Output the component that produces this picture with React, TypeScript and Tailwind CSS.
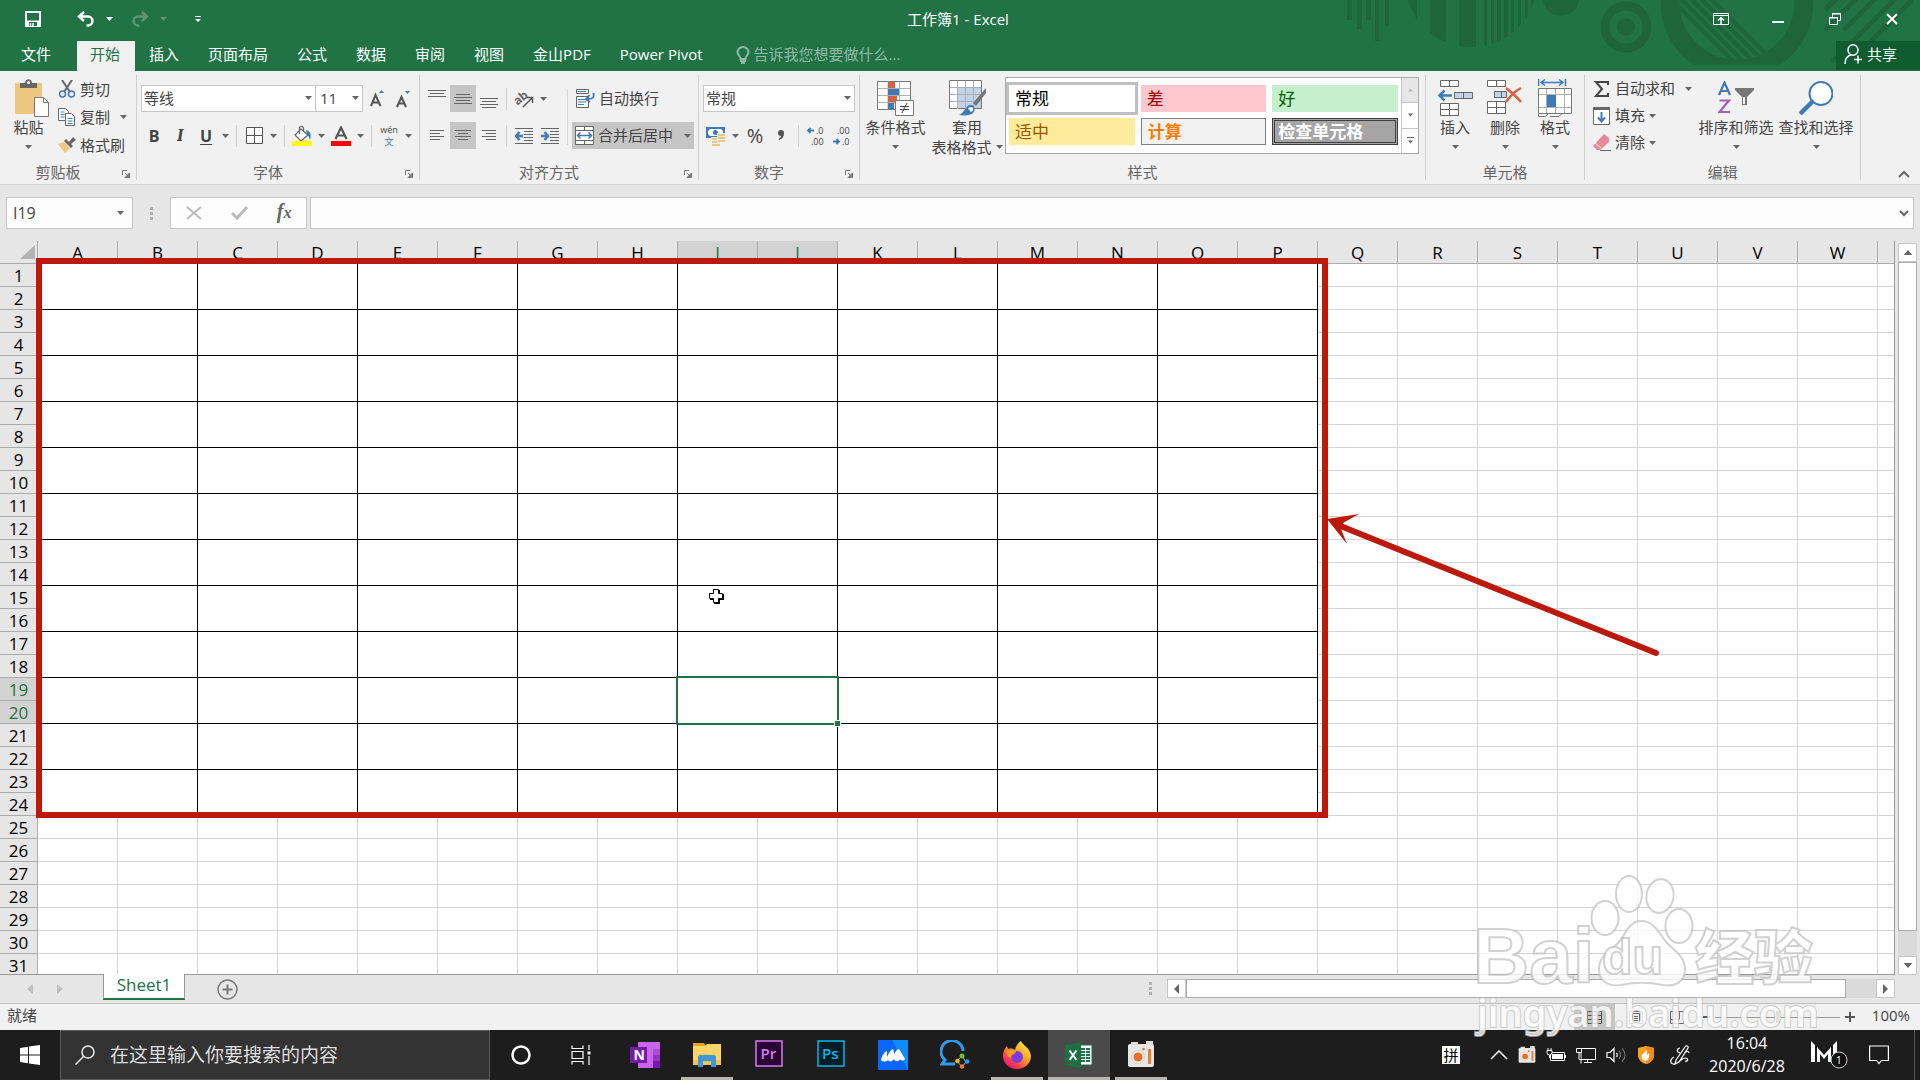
import type { ReactNode } from "react";

import { twMerge } from "tailwind-merge";

//types
type ChildrenProps = {
  children?: ReactNode;
  className?: string;
};

type ToolProps = ChildrenProps & {
  label: string;
  active?: boolean;
};

type BigToolProps = {
  icon: ReactNode;
  lines: string[];
  className?: string;
};

type SmallToolProps = {
  icon: ReactNode;
  label: string;
  arrow?: "near" | "far";
  className?: string;
};

type GroupProps = ChildrenProps & {
  title: string;
  launcher?: boolean;
};

const tabs = [
  "插入",
  "页面布局",
  "公式",
  "数据",
  "审阅",
  "视图",
  "金山PDF",
  "Power Pivot",
];

const columns = "ABCDEFGHIJKLMNOPQRSTUVW".split("");
const rows = Array.from({ length: 31 }, (_, i) => i + 1);
const mergedColumns = 16;
const mergedRows = 24;

const cellStyles = [
  { name: "常规", style: "bg-white text-black ring-3 ring-[#c0c0c0]" },
  { name: "差", style: "bg-[#ffc7ce] text-[#9c0006]" },
  { name: "好", style: "bg-[#c6efce] text-[#006100]" },
  { name: "适中", style: "bg-[#ffeb9c] text-[#9c5700]" },
  {
    name: "计算",
    style: "bg-[#f2f2f2] text-[#fa7d00] font-bold border border-[#7f7f7f]",
  },
  {
    name: "检查单元格",
    style:
      "bg-[#a5a5a5] px-[3px] text-white font-bold border-3 border-double border-[#3f3f3f]",
  },
];

//small pieces
function Arrow({ className }: ChildrenProps) {
  return (
    <svg
      viewBox="0 0 7 4"
      className={twMerge("w-[7px] h-1 shrink-0 fill-[#666]", className)}
    >
      <path d="M0 0h7L3.5 4z" />
    </svg>
  );
}

function ArrowButton({ label }: { label: string }) {
  return (
    <button
      aria-label={label}
      className="flex w-[13px] h-[27px] items-center justify-center"
    >
      <Arrow />
    </button>
  );
}

function Separator() {
  return (
    <div className="flex w-[9px] justify-center">
      <div className="w-px h-[22px] bg-[#d0d0d0]" />
    </div>
  );
}

function Tool({ label, active, children, className }: ToolProps) {
  return (
    <button
      aria-label={label}
      className={twMerge(
        "flex w-[26px] h-[27px] items-center justify-center",
        active && "bg-[#c5c5c5]",
        className
      )}
    >
      {children}
    </button>
  );
}

function BigTool({ icon, lines, className }: BigToolProps) {
  return (
    <button
      className={twMerge(
        "flex flex-col items-center pt-1 leading-5 whitespace-nowrap",
        className
      )}
    >
      <span className="flex h-[38px] items-center justify-center">{icon}</span>
      <span>{lines[0]}</span>
      <span className="flex h-5 items-center gap-1">
        {lines[1]}
        <Arrow />
      </span>
    </button>
  );
}

function SmallTool({ icon, label, arrow, className }: SmallToolProps) {
  return (
    <button
      className={twMerge("flex items-center gap-1 whitespace-nowrap", className)}
    >
      <span className="flex w-[19px] justify-center">{icon}</span>
      <span>{label}</span>
      {arrow && <Arrow className={arrow === "far" ? "ml-1.5" : ""} />}
    </button>
  );
}

function Group({ title, launcher, children, className }: GroupProps) {
  return (
    <section
      className={twMerge(
        "flex flex-col shrink-0 h-[105px] border-r border-[#d0d0d0]",
        className
      )}
    >
      <div className="flex flex-1">{children}</div>
      <div
        className={twMerge(
          "relative h-4 leading-4 text-center text-[#666]",
          launcher && "pr-5"
        )}
      >
        {title}
        {launcher && (
          <button
            aria-label={`${title}设置`}
            className="absolute right-1.5 bottom-0.5"
          >
            <svg viewBox="0 0 8 8" className="size-2" fill="none" stroke="#777">
              <path d="M.5 5V.5H5M3 3l3 3" />
              <path d="M7.500 3v4.500H3z" fill="#777" />
            </svg>
          </button>
        )}
      </div>
    </section>
  );
}

//horizontal bars used by the alignment icons: [x, y, width]
function Bars({ bars }: { bars: number[][] }) {
  return (
    <svg viewBox="0 0 18 20" className="w-[18px] h-5" fill="#666">
      {bars.map(([x, y, w], i) => (
        <rect key={i} x={x} y={y} width={w} height="1" />
      ))}
    </svg>
  );
}

function Header() {
  return (
    <header className="relative shrink-0 h-[71px] bg-[#217346] text-white overflow-hidden">
      {/* background pattern */}
      <svg
        viewBox="0 0 600 71"
        className="absolute right-0 top-0 w-[600px] h-[71px]"
        fill="#1e653c"
      >
        <defs>
          <clipPath id="disc">
            <circle cx="151" cy="-19" r="66" />
          </clipPath>
          <clipPath id="ring">
            <rect x="330" width="180" height="65" />
          </clipPath>
          <clipPath id="hole">
            <circle cx="417" cy="2" r="58" />
          </clipPath>
        </defs>
        <path d="M27 0h5v20h-5zM37 0h5v29h-5zM46 0h5v20h-5zM55 0h4v41h-4zM65 0h4v26h-4z" />
        <g clipPath="url(#disc)">
          <path d="M80 0h17v50H80zM110 0h16v50h-16zM139 0h17v50h-17zM164 0h3v50h-3zM171 0h3v50h-3zM177 0h4v50h-4zM184 0h4v50h-4zM191 0h3v50h-3zM198 0h3v50h-3zM205 0h3v50h-3zM211 0h5v50h-5z" />
        </g>
        <circle cx="241" cy="-2" r="18" />
        <circle cx="306" cy="27" r="21" fill="none" stroke="#1e653c" strokeWidth="9" />
        <circle cx="306" cy="27" r="9" />
        <g clipPath="url(#ring)">
          <circle cx="417" cy="2" r="67" fill="none" stroke="#1e653c" strokeWidth="19" />
        </g>
        <g clipPath="url(#hole)" stroke="#1e653c" strokeWidth="4">
          <path d="M350-2l80 80M350-12l90 90M358-14l90 90M368-14l84 84M378-14l74 74" />
        </g>
        <g stroke="#1e653c" strokeWidth="5">
          <path d="M505 10l14-14M505 30l34-34M524 30l34-34M512 62l66-66M530 62l62-62" />
        </g>
      </svg>

      {/* title bar */}
      <div className="relative flex h-[41px] items-start justify-between">
        <div className="flex w-56 h-[38px] items-center pl-[25px]">
          <button aria-label="保存">
            <svg viewBox="0 0 16 16" className="size-4" fill="none" stroke="#fff" strokeWidth="2">
              <path d="M1 1h14v14H1z" />
              <path d="M2 9.500h12v5H2z" fill="#fff" stroke="none" />
              <path d="M4 11h8v4H4z" fill="#217346" stroke="none" />
              <path d="M5.500 15v-3M8 12v4" stroke="#fff" strokeWidth="1.500" />
            </svg>
          </button>
          <button aria-label="撤消" className="ml-9">
            <svg viewBox="0 0 18 16" className="w-[18px] h-4" fill="none" stroke="#fff" strokeWidth="2.500">
              <path d="M7 1L2 5.500 7 10M2 5.500h9a4.500 4.500 0 010 9H9.500" />
            </svg>
          </button>
          <Arrow className="ml-[11px] fill-white" />
          <button aria-label="恢复" className="ml-[18px] opacity-25">
            <svg viewBox="0 0 18 16" className="w-[18px] h-4" fill="none" stroke="#fff" strokeWidth="2.500">
              <path d="M11 1l5 4.500-5 4.500M16 5.500H7a4.500 4.500 0 000 9h1.500" />
            </svg>
          </button>
          <Arrow className="ml-[11px] fill-white opacity-25" />
          <button aria-label="自定义快速访问工具栏" className="ml-7">
            <svg viewBox="0 0 6 6" className="size-1.5" fill="#fff">
              <path d="M0 0h6v1H0zM0 3h6L3 6z" />
            </svg>
          </button>
        </div>
        <h1 className="leading-[38px]">工作簿1 - Excel</h1>
        <div className="flex h-[38px]">
          <button aria-label="功能区显示选项" className="flex w-[57px] items-center justify-center">
            <svg viewBox="0 0 16 12" className="w-4 h-3" fill="none" stroke="#fff">
              <path d="M.5.500h15v11H.5zM1 2.500h14" />
              <path d="M8 11V5M5 7.500l3-3 3 3" strokeWidth="1.500" />
            </svg>
          </button>
          <button aria-label="最小化" className="flex w-[57px] items-center justify-center">
            <svg viewBox="0 0 12 12" className="size-3">
              <path d="M0 8h12v2H0z" fill="#fff" />
            </svg>
          </button>
          <button aria-label="向下还原" className="flex w-[57px] items-center justify-center">
            <svg viewBox="0 0 12 12" className="size-3" fill="none" stroke="#fff">
              <path d="M.5 4.500h8v7h-8zM3.500 4.500v-4h8v7h-3" />
              <path d="M0 5h9M3 1h9" />
            </svg>
          </button>
          <button aria-label="关闭" className="flex w-[57px] items-center justify-center">
            <svg viewBox="0 0 12 12" className="size-3" fill="none" stroke="#fff" strokeWidth="2">
              <path d="M1 1l10 10M11 1L1 11" />
            </svg>
          </button>
        </div>
      </div>

      {/* tabs */}
      <nav className="relative flex h-[30px] gap-px whitespace-nowrap">
        <button className="w-[76px] pr-1 pb-[3px]">文件</button>
        <button className="pl-[13px] pr-[15px] pb-[3px] bg-[#f1f1f1] text-[#217346]">
          开始
        </button>
        {tabs.map((tab) => (
          <button key={tab} className="pl-[13px] pr-[15px] pb-[3px]">
            {tab}
          </button>
        ))}
        <label className="flex flex-1 items-center gap-1 pl-[17px] pb-[3px]">
          <svg viewBox="0 0 14 18" className="w-3.5 h-[18px]" fill="none" stroke="#90b9a2" strokeWidth="2">
            <path d="M4.500 13c0-3-3-4-3-7a5.500 5 0 0111 0c0 3-3 4-3 7z" />
            <path d="M4 15h6M5 17h4" />
          </svg>
          <input
            aria-label="操作说明搜索"
            placeholder="告诉我您想要做什么..."
            className="w-[200px] bg-transparent outline-none placeholder:text-[#90b9a2]"
          />
        </label>
        <button className="flex w-[84px] h-[29px] items-center gap-1 pl-2 pb-[3px] bg-[#0e5c2f]">
          <svg viewBox="0 0 19 20" className="w-[19px] h-5" fill="none" stroke="#fff" strokeWidth="1.500">
            <ellipse cx="9" cy="6" rx="5" ry="5.200" />
            <path d="M1 20c0-5 2-8 6-9M10 15.500h8M14 11.500v8" />
          </svg>
          共享
        </button>
      </nav>
    </header>
  );
}

function ClipboardGroup() {
  return (
    <Group title="剪贴板" launcher className="w-[137px]">
      <BigTool
        lines={["粘贴"]}
        className="w-[57px]"
        icon={
          <svg viewBox="-6 0 40 38" className="w-10 h-[38px]">
            <path d="M0 4h27v31H0z" fill="#eec77e" />
            <path d="M5 9V4h5c0-5 7-5 7 0h5v5z" fill="#666" />
            <circle cx="13.500" cy="3.500" r="1.500" fill="#f1f1f1" />
            <path d="M19.500 18.500h9l5 5v14h-14z" fill="#fff" stroke="#777" />
            <path d="M28.500 18.500v5h5" fill="none" stroke="#777" />
          </svg>
        }
      />
      <div className="flex flex-col">
        <SmallTool
          label="剪切"
          className="h-7"
          icon={
            <svg viewBox="0 0 16 18" className="w-4 h-[18px]" fill="none">
              <path d="M3 0l8 12M13 0L5 12" stroke="#666" strokeWidth="2" />
              <circle cx="3.500" cy="14" r="3" stroke="#3f7ab8" strokeWidth="1.500" />
              <circle cx="12.500" cy="14" r="3" stroke="#3f7ab8" strokeWidth="1.500" />
            </svg>
          }
        />
        <SmallTool
          label="复制"
          className="h-7"
          arrow="far"
          icon={
            <svg viewBox="0 0 18 18" className="size-[18px]" fill="#fff" stroke="#666">
              <path d="M.5.500h7l3 3v9h-10z" />
              <path d="M7.500 5.500h6l3 3v9h-9z" />
              <path d="M2.500 4h4M2.500 6.500h4M2.500 9h4M9.500 10.500h5M9.500 13h5M9.500 15.500h5" stroke="#3f7ab8" />
            </svg>
          }
        />
        <SmallTool
          label="格式刷"
          className="h-7"
          icon={
            <svg viewBox="0 0 18 16" className="w-[18px] h-4">
              <path d="M0 7l6-2 6 6-5 5z" fill="#eec77e" />
              <path d="M6 4l2-2 7 7-2 2zM11 5l4-5 3 3-5 4z" fill="#666" />
            </svg>
          }
        />
      </div>
    </Group>
  );
}

function FontGroup() {
  return (
    <Group title="字体" launcher className="w-[283px]">
      <div className="flex flex-col gap-2.5 pt-2.5 pl-1">
        <div className="flex items-center">
          <div className="relative">
            <select
              aria-label="字体"
              className="w-[175px] h-[27px] pl-0.5 appearance-none bg-white border border-[#c6c6c6]"
            >
              <option>等线</option>
            </select>
            <Arrow className="absolute right-1 top-[11px] pointer-events-none" />
          </div>
          <div className="relative">
            <select
              aria-label="字号"
              className="w-[47px] h-[27px] pl-1 appearance-none bg-white border border-l-0 border-[#c6c6c6]"
            >
              <option>11</option>
            </select>
            <Arrow className="absolute right-1 top-[11px] pointer-events-none" />
          </div>
          <Tool label="增大字号">
            <svg viewBox="-2 0 16 18" className="w-4 h-[18px]" fill="none">
              <path d="M1 16L5.500 5l5 11M3 12.500h6" stroke="#555" strokeWidth="2" />
              <path d="M9 3l2.500-3L14 3z" fill="#3f7ab8" />
            </svg>
          </Tool>
          <Tool label="减小字号">
            <svg viewBox="-2 0 16 18" className="w-4 h-[18px]" fill="none">
              <path d="M1 17L5.500 7l4.500 10M3 13.500h5" stroke="#555" strokeWidth="2" />
              <path d="M9 1l2.500 3L14 1z" fill="#3f7ab8" />
            </svg>
          </Tool>
        </div>
        <div className="flex items-center">
          <Tool label="加粗" className="text-base font-bold">
            B
          </Tool>
          <Tool label="倾斜" className="font-serif text-lg font-bold italic">
            I
          </Tool>
          <Tool label="下划线" className="text-base font-bold underline underline-offset-2">
            U
          </Tool>
          <ArrowButton label="下划线选项" />
          <Separator />
          <Tool label="边框">
            <svg viewBox="0 0 17 17" className="size-[17px]" fill="#fff" stroke="#555">
              <path d="M.5.500h16v16H.5zM8.500 0v17M0 8.500h17" />
            </svg>
          </Tool>
          <ArrowButton label="边框选项" />
          <Separator />
          <Tool label="填充颜色">
            <svg viewBox="0 0 20 20" className="size-5">
              <path d="M9 3l7 6-7 6-6-6z" fill="#fff" stroke="#666" strokeWidth="1.200" />
              <path d="M7.500 8V2c0-2 4-2 4 0v4" fill="none" stroke="#666" strokeWidth="1.200" />
              <path d="M14 4c4 1 6 4 4 10-1-3-1-4-3-5z" fill="#3f7ab8" />
              <path d="M0 15h20v5H0z" fill="#ff0" />
            </svg>
          </Tool>
          <ArrowButton label="填充颜色选项" />
          <Tool label="字体颜色">
            <svg viewBox="0 0 20 20" className="size-5">
              <path d="M4.500 13L10 1.500 15.500 13M6.500 9.500h7" fill="none" stroke="#555" strokeWidth="2.200" />
              <path d="M0 15h20v5H0z" fill="#f00" />
            </svg>
          </Tool>
          <ArrowButton label="字体颜色选项" />
          <Separator />
          <Tool label="显示拼音字段" className="flex-col text-[9px] leading-3">
            <span>wén</span>
            <span className="text-[#3f7ab8]">文</span>
          </Tool>
          <ArrowButton label="拼音选项" />
        </div>
      </div>
    </Group>
  );
}

function AlignGroup() {
  return (
    <Group title="对齐方式" launcher className="w-[279px]">
      <div className="flex flex-col gap-2.5 pt-2.5 pl-1">
        <div className="flex items-center">
          <Tool label="顶端对齐">
            <Bars bars={[[0, 1, 18], [2, 4, 14], [0, 7, 18]]} />
          </Tool>
          <Tool label="垂直居中" active>
            <Bars bars={[[2, 5, 14], [0, 8, 18], [2, 11, 14], [0, 14, 18]]} />
          </Tool>
          <Tool label="底端对齐">
            <Bars bars={[[0, 9, 18], [2, 12, 14], [0, 15, 18], [2, 18, 14]]} />
          </Tool>
          <Separator />
          <Tool label="方向">
            <svg viewBox="0 0 20 20" className="size-5 overflow-visible" fill="none">
              <text
                x="0"
                y="13"
                fontSize="12"
                fontWeight="bold"
                fill="#666"
                transform="rotate(-40 7 10)"
              >
                ab
              </text>
              <path d="M9 18l9-9M13 8.500h5.500V14" stroke="#555" strokeWidth="1.500" />
            </svg>
          </Tool>
          <ArrowButton label="方向选项" />
        </div>
        <div className="flex items-center">
          <Tool label="左对齐">
            <Bars bars={[[2, 4, 14], [2, 7, 10], [2, 10, 14], [2, 13, 10]]} />
          </Tool>
          <Tool label="居中" active>
            <Bars bars={[[1, 4, 16], [4, 7, 10], [1, 10, 16], [4, 13, 10]]} />
          </Tool>
          <Tool label="右对齐">
            <Bars bars={[[2, 4, 14], [6, 7, 10], [2, 10, 14], [6, 13, 10]]} />
          </Tool>
          <Separator />
          <Tool label="减少缩进量">
            <svg viewBox="0 0 18 16" className="w-[18px] h-4">
              <path d="M0 0h18v1H0zM9 3h9v1H9zM9 6h9v1H9zM9 9h9v1H9zM9 12h9v1H9zM0 15h18v1H0z" fill="#666" />
              <path d="M8 8H1M4.500 4L1 8l3.500 4" fill="none" stroke="#3f7ab8" strokeWidth="2.500" />
            </svg>
          </Tool>
          <Tool label="增加缩进量">
            <svg viewBox="0 0 18 16" className="w-[18px] h-4">
              <path d="M0 0h18v1H0zM9 3h9v1H9zM9 6h9v1H9zM9 9h9v1H9zM9 12h9v1H9zM0 15h18v1H0z" fill="#666" />
              <path d="M0 8h7M3.500 4L7 8l-3.500 4" fill="none" stroke="#3f7ab8" strokeWidth="2.500" />
            </svg>
          </Tool>
        </div>
      </div>
      <div className="flex w-[9px] justify-center pt-3.5">
        <div className="w-px h-14 bg-[#d8d8d8]" />
      </div>
      <div className="flex flex-col gap-2.5 pt-2.5">
        <SmallTool
          label="自动换行"
          className="h-[27px] pl-1"
          icon={
            <svg viewBox="0 0 19 19" className="size-[19px]" fill="#fff" stroke="#666">
              <path d="M.5.500h12v4H.5zM.5 7.500h12v11H.5z" />
              <path d="M2 2.500h8M2 10.500h8M2 13h8M2 15.500h6" stroke="#3f7ab8" />
              <path d="M17.500 4c1 5-1 6-7 6M13.500 6l-3.500 4 4 3" fill="none" stroke="#3f7ab8" strokeWidth="1.800" />
            </svg>
          }
        />
        <div className="flex w-[122px] h-[27px] bg-[#c5c5c5]">
          <SmallTool
            label="合并后居中"
            className="pl-[3px] pr-2"
            icon={
              <svg viewBox="0 0 19 19" className="size-[19px]" fill="#fff" stroke="#666">
                <path d="M.5.500h18v18H.5z" />
                <path d="M0 4.500h19M0 14.500h19M9.500 0v4M9.500 15v4" />
                <path d="M3 9.500h13M5.500 6.500l-3 3 3 3M13.500 6.500l3 3-3 3" fill="none" stroke="#3f7ab8" strokeWidth="1.500" />
              </svg>
            }
          />
          <ArrowButton label="合并选项" />
        </div>
      </div>
    </Group>
  );
}

function NumberGroup() {
  return (
    <Group title="数字" launcher className="w-[161px]">
      <div className="flex flex-col gap-2.5 pt-2.5 pl-1">
        <div className="relative">
          <select
            aria-label="数字格式"
            className="w-[152px] h-[27px] pl-0.5 appearance-none bg-white border border-[#c6c6c6]"
          >
            <option>常规</option>
          </select>
          <Arrow className="absolute right-1 top-[11px] pointer-events-none" />
        </div>
        <div className="flex items-center">
          <Tool label="会计数字格式">
            <svg viewBox="0 0 20 20" className="size-5">
              <path d="M0 1h19v11H0z" fill="#3f7ab8" />
              <path d="M4 3h11l2 2v3l-2 2H4L2 8V5z" fill="#fff" />
              <circle cx="9.500" cy="6.500" r="2.500" fill="#3f7ab8" />
              <path d="M11 7h9v13H5v-9h6z" fill="#f1f1f1" />
              <path d="M12 8h7v2h-7zM12 11h7v2h-7zM12 14h7v2h-7zM6 12h5v2H6zM6 15h5v2H6zM6 18h8v2H6z" fill="#eec77e" />
            </svg>
          </Tool>
          <ArrowButton label="会计格式选项" />
          <Tool label="百分比样式" className="text-xl">
            %
          </Tool>
          <Tool label="千位分隔样式">
            <svg viewBox="0 0 8 12" className="w-2 h-3" fill="#555">
              <path d="M1 3a3 3 0 016 0c0 4-2 6-5 7l-.5-1C3 8 4 7 4 6 2 6 1 5 1 3z" />
            </svg>
          </Tool>
          <Separator />
          <Tool label="增加小数位数">
            <svg viewBox="0 0 18 20" className="w-[18px] h-5 overflow-visible" fontSize="9" fill="#444">
              <text x="9" y="8">.0</text>
              <text x="4" y="19">.00</text>
              <path d="M7 4.500H1M3.500 2L1 4.500 3.500 7" fill="none" stroke="#3f7ab8" strokeWidth="1.800" />
            </svg>
          </Tool>
          <Tool label="减少小数位数">
            <svg viewBox="0 0 18 20" className="w-[18px] h-5 overflow-visible" fontSize="9" fill="#444">
              <text x="4" y="8">.00</text>
              <text x="9" y="19">.0</text>
              <path d="M0 15.500h6M3.500 13L6 15.500 3.500 18" fill="none" stroke="#3f7ab8" strokeWidth="1.800" />
            </svg>
          </Tool>
        </div>
      </div>
    </Group>
  );
}

function StylesGroup() {
  return (
    <Group title="样式" className="w-[566px]">
      <BigTool
        lines={["条件格式"]}
        className="w-[71px]"
        icon={
          <svg viewBox="0 0 37 36" className="w-[37px] h-9" fill="#fff" stroke="#b0b0b0">
            <path d="M.5 1.500h33v28H.5z" stroke="#777" />
            <path d="M11 1.500v28M22.500 1.500v28M1 8.500h32M1 15.500h32M1 22.500h32" fill="none" />
            <path d="M11 2h7v6h-7zM11 16h9v6h-9z" fill="#d9603f" stroke="none" />
            <path d="M11 9h11v6H11zM11 23h6v6h-6z" fill="#3f7ab8" stroke="none" />
            <path d="M18.500 20.500h18v15h-18z" stroke="#777" />
            <path d="M23 26.500h9M23 29.500h9M30 23l-5 10" stroke="#444" fill="none" />
          </svg>
        }
      />
      <BigTool
        lines={["套用", "表格格式"]}
        className="w-[72px]"
        icon={
          <svg viewBox="0 0 37 36" className="w-[37px] h-9" fill="#fff" stroke="#b0b0b0">
            <path d="M.5.500h32v28H.5z" stroke="#777" />
            <path d="M9 8h23v20H9z" fill="#c0d3e9" stroke="none" />
            <path d="M8.500 1v28M16.500 1v28M24.500 1v28M1 7.500h31M1 14.500h31M1 21.500h31" fill="none" />
            <path d="M37 8v5L27 26l-3-3z" fill="#777" stroke="none" />
            <path d="M10 35c6-2 6-10 12-10 4 0 5 5 2 8-2 2-8 3-14 2z" fill="#3f7ab8" stroke="none" />
            <path d="M19 29c0-2 4-3 5-1 1 1-1 4-2 4s0-2-3-3z" stroke="none" />
          </svg>
        }
      />
      <div className="flex w-[414px] h-[77px] mt-0.5 ml-0.5 border border-[#ababab] bg-white">
        <div className="grid flex-1 grid-cols-3 content-start gap-1.5 pt-[7px] px-[3px] text-[17px] leading-5">
          {cellStyles.map((item) => (
            <button
              key={item.name}
              className={twMerge(
                "flex h-[27px] items-center px-1.5 whitespace-nowrap",
                item.style
              )}
            >
              {item.name}
            </button>
          ))}
        </div>
        <div className="flex w-[17px] flex-col divide-y divide-[#c6c6c6] border-l border-[#c6c6c6]">
          <button aria-label="上一行" className="flex flex-1 items-center justify-center bg-[#e6e6e6]">
            <Arrow className="w-[5px] rotate-180 fill-[#bbb]" />
          </button>
          <button aria-label="下一行" className="flex flex-1 items-center justify-center">
            <Arrow className="w-[5px]" />
          </button>
          <button aria-label="其他" className="flex flex-1 flex-col gap-0.5 items-center justify-center">
            <span className="w-[7px] h-px bg-[#666]" />
            <Arrow className="w-[5px]" />
          </button>
        </div>
      </div>
    </Group>
  );
}

function CellsGroup() {
  return (
    <Group title="单元格" className="w-[159px]">
      <div className="flex pl-1">
        <BigTool
          lines={["插入"]}
          className="w-[50px]"
          icon={
            <svg viewBox="0 0 36 36" className="size-9" fill="#fff" stroke="#666">
              <path d="M3.500.500h18v6h-18zM12.500 1v6M3.500 23.500h18v12h-18zM12.500 24v12M4 29.500h18" />
              <path d="M17.500 12.500h18v6h-18zM26.500 13v6" fill="#c0d3e9" />
              <path d="M15 15.500H3M7.500 10.500l-5 5 5 5" fill="none" stroke="#3f7ab8" strokeWidth="2.500" />
            </svg>
          }
        />
        <BigTool
          lines={["删除"]}
          className="w-[50px]"
          icon={
            <svg viewBox="0 0 36 36" className="size-9" fill="#fff" stroke="#666">
              <path d="M.5.500h18v6H.5zM9.500 1v6M.5 21.500h18v12H.5zM9.500 22v12M1 27.500h18" />
              <path d="M7.500 11.500h12v6h-12zM14.500 12v6" fill="#c0d3e9" />
              <path d="M19 8c5 4 10 8 15 14M34 8c-6 3-11 8-15 14" fill="none" stroke="#d9603f" strokeWidth="2.500" />
            </svg>
          }
        />
        <BigTool
          lines={["格式"]}
          className="w-[50px]"
          icon={
            <svg viewBox="0 0 34 38" className="w-[34px] h-[38px]" fill="#fff" stroke="#b0b0b0">
              <path d="M.5 9.500h33v25H.5z" stroke="#777" />
              <path d="M8.500 10v24M17.500 10v24M26.500 10v24M1 15.500h32M1 28.500h32" fill="none" />
              <path d="M9 16h9v12H9z" fill="#3f7ab8" stroke="none" />
              <path d="M.5 34.500v3h7l3-3M12 37.500h9l3-3" stroke="#777" fill="none" />
              <path d="M.5 0v7M27.500 0v7M3 3.500h22M7 .5l-4 3 4 3M21 .5l4 3-4 3" fill="none" stroke="#3f7ab8" strokeWidth="1.500" />
            </svg>
          }
        />
      </div>
    </Group>
  );
}

function EditGroup() {
  return (
    <Group title="编辑" className="w-[276px]">
      <div className="flex w-[111px] flex-col items-start pl-[7px]">
        <SmallTool
          label="自动求和"
          className="h-[27px]"
          arrow="far"
          icon={
            <svg viewBox="0 0 16 16" className="size-4" fill="none" stroke="#444" strokeWidth="2">
              <path d="M14 4V1H2l6 7-6 7h12v-3" />
            </svg>
          }
        />
        <SmallTool
          label="填充"
          className="h-[27px]"
          arrow="near"
          icon={
            <svg viewBox="0 0 17 18" className="w-[17px] h-[18px]" fill="#fff" stroke="#666">
              <path d="M.5.500h16v17H.5z" />
              <path d="M0 0h17v3H0z" fill="#666" stroke="none" />
              <path d="M8.500 5v9M5 10.500l3.500 4 3.500-4" fill="none" stroke="#3f7ab8" strokeWidth="2" />
            </svg>
          }
        />
        <SmallTool
          label="清除"
          className="h-[27px]"
          arrow="near"
          icon={
            <svg viewBox="0 0 18 17" className="w-[18px] h-[17px]">
              <path d="M11 0l5 4v4l-9 8H4l-4-4z" fill="#e58a9b" />
              <path d="M2 9l6 5" stroke="#f1f1f1" />
              <path d="M7 16h11v1H7z" fill="#666" />
            </svg>
          }
        />
      </div>
      <BigTool
        lines={["排序和筛选"]}
        className="w-20"
        icon={
          <svg viewBox="0 0 36 34" className="w-9 h-[34px]" fill="none" strokeWidth="2.200">
            <path d="M1 14L6.500 1.500 12 14M3 10h7" stroke="#3f7ab8" />
            <path d="M1.500 19.500h9.500L1.500 31H12" stroke="#9b62b8" />
            <path d="M17 7h19v2l-7 7v8h-5v-8l-7-7z" fill="#777" />
            <path d="M25 16h2v7h-2z" fill="#f1f1f1" />
          </svg>
        }
      />
      <BigTool
        lines={["查找和选择"]}
        className="w-20"
        icon={
          <svg viewBox="0 0 34 34" className="size-[34px]" stroke="#3f7ab8">
            <circle cx="22" cy="12.500" r="11.500" fill="#fff" strokeWidth="2" />
            <path d="M13 21L2.500 31.500" strokeWidth="4.500" strokeLinecap="round" />
          </svg>
        }
      />
    </Group>
  );
}

function Ribbon() {
  return (
    <div className="flex shrink-0 h-[114px] py-1 bg-[#f1f1f1] border-b border-[#d5d5d5]">
      <ClipboardGroup />
      <FontGroup />
      <AlignGroup />
      <NumberGroup />
      <StylesGroup />
      <CellsGroup />
      <EditGroup />
      <div className="flex flex-1 items-end justify-end pr-2.5 pb-0.5">
        <button aria-label="折叠功能区">
          <svg viewBox="0 0 12 8" className="w-3 h-2" fill="none" stroke="#666" strokeWidth="2">
            <path d="M1 7l5-5 5 5" />
          </svg>
        </button>
      </div>
    </div>
  );
}

function Dots() {
  return (
    <div className="flex flex-col gap-0.5">
      <span className="size-[3px] bg-[#b0b0b0]" />
      <span className="size-[3px] bg-[#b0b0b0]" />
      <span className="size-[3px] bg-[#b0b0b0]" />
    </div>
  );
}

function FormulaBar() {
  return (
    <div className="flex shrink-0 h-14 py-3 px-1.5 items-stretch">
      <div className="flex w-[127px] items-center bg-[#fdfdfd] border border-[#c6c6c6] pr-2">
        <input
          aria-label="名称框"
          defaultValue="I19"
          className="w-full min-w-0 pl-1.5 bg-transparent outline-none text-base"
        />
        <Arrow />
      </div>
      <div className="flex w-[37px] items-center justify-center">
        <Dots />
      </div>
      <div className="flex w-[137px] items-center justify-around bg-[#fdfdfd] border border-[#c6c6c6]">
        <button aria-label="取消">
          <svg viewBox="0 0 16 14" className="w-4 h-3.5" fill="none" stroke="#bbb" strokeWidth="2">
            <path d="M1 1l14 12M15 1L1 13" />
          </svg>
        </button>
        <button aria-label="输入">
          <svg viewBox="0 0 17 14" className="w-[17px] h-3.5" fill="none" stroke="#bbb" strokeWidth="3">
            <path d="M1 7l5 5L16 1" />
          </svg>
        </button>
        <button
          aria-label="插入函数"
          className="pb-0.5 font-[Liberation_Serif,serif] text-xl leading-6 italic font-bold text-[#666]"
        >
          f<span className="text-base">x</span>
        </button>
      </div>
      <div className="flex flex-1 ml-[3px] items-center bg-[#fdfdfd] border border-[#c6c6c6] pr-1">
        <input aria-label="编辑栏" className="flex-1 px-2 bg-transparent outline-none" />
        <button aria-label="展开编辑栏">
          <svg viewBox="0 0 10 7" className="w-2.5 h-[7px]" fill="none" stroke="#666" strokeWidth="2">
            <path d="M1 1l4 4 4-4" />
          </svg>
        </button>
      </div>
    </div>
  );
}

function Sheet() {
  return (
    <div className="relative flex-1 overflow-hidden border-r border-b border-[#999]">
      <table className="w-full table-fixed border-separate border-spacing-0 text-[17px] leading-5 text-black">
        <colgroup>
          <col className="w-[38px]" />
          {columns.map((column) => (
            <col key={column} className="w-20" />
          ))}
          <col />
        </colgroup>
        <thead>
          <tr className="h-[23px]">
            <th className="p-0 border-r border-b border-[#ababab]">
              <svg viewBox="0 0 16 16" className="size-4 ml-auto mr-0.5" fill="#b3b3b3">
                <path d="M16 1v14H1z" />
              </svg>
            </th>
            {columns.map((column) => (
              <th
                key={column}
                className={twMerge(
                  "p-0 pt-0.5 font-normal border-r border-b border-[#ababab]",
                  (column === "I" || column === "J") &&
                    "bg-[#d2d2d2] text-[#217346]"
                )}
              >
                {column}
              </th>
            ))}
            <th className="p-0 border-b border-[#ababab]" />
          </tr>
        </thead>
        <tbody>
          {rows.map((row) => (
            <tr key={row} className="h-[23px] bg-white">
              <th
                className={twMerge(
                  "p-0 pt-0.5 font-normal bg-[#e6e6e6] border-r border-b border-[#ababab]",
                  (row === 19 || row === 20) && "bg-[#d2d2d2] text-[#217346]"
                )}
              >
                {row}
              </th>
              {columns.map((column, index) => {
                if (row <= mergedRows && index < mergedColumns) {
                  //one bordered cell stands for a merged 2x2 block
                  return row % 2 === 1 && index % 2 === 0 ? (
                    <td
                      key={column}
                      rowSpan={2}
                      colSpan={2}
                      className="p-0 border-r border-b border-black"
                    />
                  ) : null;
                }
                return (
                  <td
                    key={column}
                    className="p-0 border-r border-b border-[#d4d4d4]"
                  />
                );
              })}
              <td className="p-0 border-b border-[#d4d4d4]" />
            </tr>
          ))}
        </tbody>
      </table>

      {/* selected cell */}
      <div className="absolute left-[676px] top-[435px] w-[163px] h-[49px] border-2 border-[#217346]">
        <span className="absolute -right-1 -bottom-1 size-[7px] bg-[#217346] border border-white" />
      </div>

      {/* mouse pointer */}
      <svg viewBox="0 0 15 15" className="absolute left-[709px] top-[348px] size-[15px]">
        <path d="M5 1h6v4h4v6h-4v4H5v-4H1V5h4z" fill="#000" />
        <path d="M4.500.500h5v4h4v5h-4v4h-5v-4h-4v-5h4z" fill="#fff" stroke="#000" />
      </svg>

      {/* red frame and arrow */}
      <div className="absolute left-[36px] top-[17px] w-[1292px] h-[560px] border-6 border-[#bd190a]" />
      <svg viewBox="0 0 340 150" className="absolute left-[1326px] top-[271px] w-[340px] h-[150px]">
        <path d="M12 13L330 141" stroke="#bd190a" strokeWidth="6" strokeLinecap="round" />
        <path d="M1 7l32-5-16 9-2 6 6 15z" fill="#bd190a" />
      </svg>
    </div>
  );
}

function VerticalScroll() {
  return (
    <div className="flex w-[25px] flex-col px-[3px] pt-0.5">
      <button aria-label="向上滚动" className="flex h-[19px] items-center justify-center bg-white border border-[#c6c6c6]">
        <Arrow className="w-2.5 h-[5px] rotate-180" />
      </button>
      <div className="flex-1 bg-[#dadada] pb-[25px]">
        <div className="h-full bg-white border border-[#ababab]" />
      </div>
      <button aria-label="向下滚动" className="flex h-[19px] items-center justify-center bg-white border border-[#c6c6c6]">
        <Arrow className="w-2.5 h-[5px]" />
      </button>
    </div>
  );
}

function SheetBar() {
  return (
    <div className="flex shrink-0 h-[29px] items-start border-b border-[#c0c0c0]">
      <div className="flex w-[103px] h-7 items-center gap-6 pl-[27px]">
        <button aria-label="上一张">
          <svg viewBox="0 0 6 10" className="w-1.5 h-2.5" fill="#c0c0c0">
            <path d="M6 0v10L0 5z" />
          </svg>
        </button>
        <button aria-label="下一张">
          <svg viewBox="0 0 6 10" className="w-1.5 h-2.5" fill="#c0c0c0">
            <path d="M0 0v10l6-5z" />
          </svg>
        </button>
      </div>
      <button className="relative w-[82px] h-[26px] -mt-px pb-[3px] bg-white border-x border-x-[#999] border-b-2 border-b-[#217346] text-[17px] leading-5 text-[#217346]">
        Sheet1
      </button>
      <button aria-label="新工作表" className="ml-8 mt-1">
        <svg viewBox="0 0 21 21" className="size-[21px]" fill="none" stroke="#777">
          <circle cx="10.500" cy="10.500" r="9.500" strokeWidth="1.500" />
          <path d="M5.500 10.500h10M10.500 5.500v10" strokeWidth="2" />
        </svg>
      </button>
      <div className="flex flex-1 justify-end pr-[15px] pt-[7px]">
        <Dots />
      </div>
      <div className="flex w-[728px] h-[19px] mt-1 mr-[25px]">
        <button aria-label="向左滚动" className="flex w-[19px] items-center justify-center bg-white border border-[#c6c6c6]">
          <svg viewBox="0 0 5 10" className="w-[5px] h-2.5" fill="#666">
            <path d="M5 0v10L0 5z" />
          </svg>
        </button>
        <div className="flex-1 bg-[#dadada] pr-[30px]">
          <div className="h-full bg-white border border-[#ababab]" />
        </div>
        <button aria-label="向右滚动" className="flex w-[19px] items-center justify-center bg-white border border-[#c6c6c6]">
          <svg viewBox="0 0 5 10" className="w-[5px] h-2.5" fill="#666">
            <path d="M0 0v10l5-5z" />
          </svg>
        </button>
      </div>
    </div>
  );
}

function StatusBar() {
  return (
    <div className="flex shrink-0 h-[26px] items-center pl-[7px] pr-2.5 bg-[#f1f1f1]">
      <span className="flex-1 pb-[3px]">就绪</span>
      <button aria-label="普通" className="flex w-[41px] h-full items-center justify-center bg-[#c5c5c5]">
        <svg viewBox="0 0 15 13" className="w-[15px] h-[13px]" fill="none" stroke="#555">
          <path d="M.5.500h14v12H.5zM5.500 0v13M10 0v13M0 4.500h15M0 8.500h15" />
        </svg>
      </button>
      <button aria-label="页面布局" className="flex w-[41px] h-full items-center justify-center">
        <svg viewBox="0 0 14 13" className="w-3.5 h-[13px]" fill="none" stroke="#666">
          <path d="M.5.500h13v12H.5zM3.500 2.500h7v10M3.500 2.500v10M5 5.500h4M5 7.500h4M5 9.500h4" />
        </svg>
      </button>
      <button aria-label="分页预览" className="flex w-[41px] h-full items-center justify-center">
        <svg viewBox="0 0 14 13" className="w-3.5 h-[13px]" fill="none" stroke="#666">
          <path d="M.5.500h13v12H.5zM5.500 0v8M9.500 0v8M0 8.500h9.500" />
        </svg>
      </button>
      <button aria-label="缩小" className="flex w-[18px] justify-center">
        <span className="w-[7px] h-0.5 bg-[#555]" />
      </button>
      <input
        type="range"
        aria-label="显示比例"
        className="w-[125px] h-px appearance-none bg-[#999] [&::-webkit-slider-thumb]:appearance-none [&::-webkit-slider-thumb]:w-1 [&::-webkit-slider-thumb]:h-3 [&::-webkit-slider-thumb]:bg-[#666]"
      />
      <button aria-label="放大" className="flex w-5 justify-center">
        <svg viewBox="0 0 12 12" className="size-3">
          <path d="M5 1h2v4h4v2H7v4H5V7H1V5h4z" fill="#555" />
        </svg>
      </button>
      <span className="w-[50px] pb-[3px] text-right">100%</span>
    </div>
  );
}

type TaskProps = ChildrenProps & {
  label: string;
  open?: boolean;
  active?: boolean;
};

function Task({ label, open, active, children }: TaskProps) {
  return (
    <button
      aria-label={label}
      className={twMerge(
        "relative flex w-[62px] h-full items-center justify-center",
        active && "bg-[#4a4a4a]"
      )}
    >
      {children}
      {open && (
        <span
          className={twMerge(
            "absolute inset-x-[5px] bottom-0 h-[3px] bg-[#b9b6b2]",
            active && "inset-x-0"
          )}
        />
      )}
    </button>
  );
}

function RecorderIcon({ className }: ChildrenProps) {
  return (
    <svg viewBox="0 0 28 28" className={className}>
      <rect x="1" y="3" width="26" height="23" rx="2" fill="#e9e7e5" />
      <path d="M4 1h7v3H4zM19 0h7v4h-7z" fill="#ddd" />
      <circle cx="11" cy="16" r="6.500" fill="#f7f3ef" stroke="#ccc" />
      <circle cx="11" cy="16" r="4.500" fill="#e96e28" />
      <path d="M21 8h3v15h-3z" fill="#ec7d33" />
      <circle cx="16.500" cy="8" r="1.300" fill="#e96e28" />
    </svg>
  );
}

function Taskbar() {
  return (
    <footer className="flex shrink-0 h-[50px] items-center bg-[#1d1d1d] text-white">
      <button aria-label="开始" className="flex w-[60px] h-full items-center justify-center">
        <svg viewBox="0 0 20 20" className="size-5" fill="#fff">
          <path d="M0 3l8-1.200V9.500H0zM9 1.600L20 0v9.500H9zM0 10.500h8v7.700L0 17zM9 10.500h11V20L9 18.400z" />
        </svg>
      </button>
      <label className="flex w-[430px] h-full items-center gap-[15px] pl-3.5 bg-[#333] border border-[#5a5a5a]">
        <svg viewBox="0 0 20 20" className="size-5" fill="none" stroke="#eee" strokeWidth="1.500">
          <circle cx="13" cy="7" r="6" />
          <path d="M8.700 11.300L.5 19.500" />
        </svg>
        <input
          aria-label="搜索"
          placeholder="在这里输入你要搜索的内容"
          className="flex-1 bg-transparent outline-none text-[19px] placeholder:text-[#ddd]"
        />
      </label>
      <Task label="Cortana">
        <svg viewBox="0 0 20 20" className="size-5" fill="none" stroke="#fff" strokeWidth="2.500">
          <circle cx="10" cy="10" r="8.500" />
        </svg>
      </Task>
      <Task label="任务视图">
        <svg viewBox="0 0 24 20" className="w-6 h-5" fill="none" stroke="#fff" strokeWidth="1.200">
          <path d="M1 .5v3h11v-3M1 6.500h11v7H1zM1 19.500v-3h11v3M18 0v5M18 11v9" />
          <path d="M16.500 6.500h3v3h-3z" fill="#fff" stroke="none" />
        </svg>
      </Task>
      <Task label="OneNote">
        <svg viewBox="0 0 30 26" className="w-[30px] h-[26px]">
          <path d="M8 0h22v26H8z" fill="#ca64ea" />
          <path d="M23 7h7v6h-7z" fill="#ae4bd5" />
          <path d="M23 13h7v6h-7z" fill="#9332bf" />
          <path d="M23 19h7v7h-7z" fill="#7719aa" />
          <path d="M0 5h17v16H0z" fill="#7719aa" />
          <text x="3.500" y="18" fontSize="14" fontWeight="bold" fill="#fff">N</text>
        </svg>
      </Task>
      <Task label="文件资源管理器" open>
        <svg viewBox="0 0 28 24" className="w-7 h-6">
          <path d="M0 0h11l2 3H0z" fill="#e2a21b" />
          <path d="M0 3h12l2-2h14v21H0z" fill="#ffd567" />
          <path d="M0 17h28v5H0z" fill="#f7c54a" />
          <path d="M5 24V14c0-1 1-2 2-2h14c1 0 2 1 2 2v10h-5v-6h-8v6z" fill="#3f96dc" />
        </svg>
      </Task>
      <Task label="Premiere">
        <svg viewBox="0 0 28 30" className="w-7 h-[30px]">
          <path d="M1 1h26v25H1z" fill="#2a0634" stroke="#d779f3" strokeWidth="1.500" />
          <text x="5.500" y="19" fontSize="15" fontWeight="600" fill="#d779f3">Pr</text>
        </svg>
      </Task>
      <Task label="Photoshop">
        <svg viewBox="0 0 28 30" className="w-7 h-[30px]">
          <path d="M1 1h26v25H1z" fill="#001d26" stroke="#00b8ec" strokeWidth="1.500" />
          <text x="5" y="19" fontSize="15" fontWeight="600" fill="#00b8ec">Ps</text>
        </svg>
      </Task>
      <Task label="墨刀">
        <svg viewBox="0 0 30 30" className="size-[30px]">
          <path d="M0 0h30v30H0z" fill="#0a66ff" />
          <path d="M14 0h16v30z" fill="#0d8bff" />
          <path d="M3 20c1-5 4-9 6-9v6c2-4 4-8 6-8 1 2 1 4 1 6 1-3 3-6 5-6 2 3 5 8 6 10-1 2-4 2-5 0-1 3-5 3-6 0-2 3-5 3-6 1-2 2-5 2-7 0z" fill="#fff" />
        </svg>
      </Task>
      <Task label="搜索助手">
        <svg viewBox="0 0 30 30" className="size-[30px]" fill="none">
          <path d="M15 24H2l3-4a11 11 0 1118-9" stroke="#2d9cf0" strokeWidth="3" />
          <path d="M22 16l-5 5M22 16l4 6M17 21l5 6M26 22l-4 5" stroke="#aaa" />
          <circle cx="22" cy="16" r="2.500" fill="#6cc324" />
          <circle cx="17.500" cy="21" r="2.300" fill="#f5b81c" />
          <circle cx="27" cy="21.500" r="2.300" fill="#2d9cf0" />
          <circle cx="22" cy="26.500" r="2.300" fill="#f07c1c" />
        </svg>
      </Task>
      <Task label="Firefox" open>
        <svg viewBox="0 0 28 28" className="size-7">
          <defs>
            <linearGradient id="fox" x1="1" y1="0" x2="0.200" y2="1">
              <stop offset="0.100" stopColor="#fff14a" />
              <stop offset="0.500" stopColor="#ff9a1f" />
              <stop offset="0.800" stopColor="#ff3750" />
              <stop offset="1" stopColor="#e31587" />
            </linearGradient>
          </defs>
          <path d="M18 0c1 4 9 6 10 15 0 7-6 13-14 13S0 22 0 15c0-4 1-7 4-10l1 3c4-1 5 0 7 1 1-4 3-7 6-9z" fill="url(#fox)" />
          <circle cx="14" cy="16" r="6" fill="#7a3be0" />
          <path d="M4 9c4-2 9 0 9 2-2 3-5 2-5 6-3-1-5-4-4-8z" fill="#ff9a1f" />
        </svg>
      </Task>
      <Task label="Excel" open active>
        <svg viewBox="0 0 28 26" className="w-7 h-[26px]">
          <path d="M13 3h14v20H13z" fill="#fff" stroke="#217346" />
          <path d="M16 6h4v2h-4zM16 9h4v2h-4zM16 12h4v2h-4zM16 15h4v2h-4zM16 18h4v2h-4zM21 6h4v2h-4zM21 9h4v2h-4zM21 12h4v2h-4zM21 15h4v2h-4zM21 18h4v2h-4z" fill="#217346" />
          <path d="M0 3l16-3v26L0 23z" fill="#1d7044" />
          <path d="M4.500 8.500l7 9.500M11.500 8.500l-7 9.500" stroke="#fff" strokeWidth="2" />
        </svg>
      </Task>
      <Task label="录像机" open>
        <RecorderIcon className="size-7" />
      </Task>

      {/* tray */}
      <div className="flex flex-1 items-center justify-end gap-3">
        <div className="flex items-center gap-2.5">
          <button aria-label="输入法" className="mr-5 size-[18px] bg-white text-black text-[15px] leading-[18px]">
            拼
          </button>
          <button aria-label="显示隐藏的图标">
            <svg viewBox="0 0 18 10" className="w-[18px] h-2.5" fill="none" stroke="#fff" strokeWidth="1.500">
              <path d="M1 9l8-8 8 8" />
            </svg>
          </button>
          <RecorderIcon className="size-[18px]" />
          <svg viewBox="0 0 20 16" className="w-5 h-4" fill="none" stroke="#fff">
            <path d="M4.500 5.500h14v8h-14z" />
            <path d="M6 7h11v5H6zM19 8h1v3h-1z" fill="#fff" stroke="none" />
            <path d="M1 3.500h5v2a2.500 2.500 0 01-5 0zM2 1v2M5 1v2M3.500 8v3" fill="#1d1d1d" />
          </svg>
          <svg viewBox="0 0 20 17" className="w-5 h-[17px]" fill="none" stroke="#fff">
            <path d="M5 1.500h14.500v11H5M5 1.500v15M8 15.500h8M11.500 12v4" />
            <path d="M.5 1.500h5v4h-5zM3 5.500v7h2" fill="#1d1d1d" />
          </svg>
          <svg viewBox="0 0 20 16" className="w-5 h-4" fill="none" stroke="#fff" strokeWidth="1.200">
            <path d="M1 5.500h3l4-4v13l-4-4H1z" />
            <path d="M10.500 6c1 1 1 3 0 4" />
            <path d="M13 4c2 2 2 6 0 8M16 1.500c4 4 4 9 0 13" stroke="#777" />
          </svg>
        </div>
        <svg viewBox="0 0 16 18" className="w-4 h-[18px]">
          <path d="M0 2l8-2 8 2v7c0 5-4 8-8 9-4-1-8-4-8-9z" fill="#fba21b" />
          <path d="M8 0l8 2v7c0 5-4 8-8 9z" fill="#f58a14" />
          <path d="M8 4c3 2 0 4 1 5l2-2c1 4-1 7-3 8-3 0-5-3-4-6 1-2 4-3 4-5z" fill="#fff" />
        </svg>
        <svg viewBox="0 0 20 20" className="size-5 ml-1" fill="none" stroke="#fff" strokeWidth="1.200">
          <path d="M6 15L15 2c1-2 4-1 3 1L9 17l-4 2zM10 8c-4-1-3-5 0-5M4 12c-3 1-5 6-1 7 5 1 8-6 12-6 4 0 3 4 0 3M14 8c3-2 5-2 5 0" />
        </svg>
        <time className="w-[90px] text-center text-base leading-[23px]">
          16:04
          <br />
          2020/6/28
        </time>
        <svg viewBox="0 0 37 28" className="w-[37px] h-7 ml-[7px]">
          <path d="M0 0l4 4v17H0zM6 6l7 8 7-8v15h-3v-8l-4 5-4-5v8H6zM22 4l4-4v21h-4z" fill="#fff" />
          <circle cx="28" cy="19" r="8" fill="#111" stroke="#ccc" />
          <text x="25" y="23" fontSize="10" fill="#fff">1</text>
        </svg>
        <button aria-label="操作中心" className="ml-[9px] mr-[25px]">
          <svg viewBox="0 0 20 20" className="size-5" fill="none" stroke="#fff" strokeWidth="1.200">
            <path d="M.6 1h18.800v14.500h-7L10 18.500l-2.400-3h-7z" />
          </svg>
        </button>
      </div>
      {/* show desktop */}
      <button aria-label="显示桌面" className="w-1.5 h-full border-l border-[#555]" />
    </footer>
  );
}

function Watermark() {
  return (
    <svg
      viewBox="0 0 360 180"
      className="absolute right-[95px] bottom-[29px] w-[360px] h-[180px] pointer-events-none"
      fill="#fff"
      fillOpacity="0.8"
      stroke="#bdbdbd"
      strokeOpacity="0.7"
      strokeWidth="2"
    >
      <ellipse cx="140" cy="47" rx="13.500" ry="17" />
      <ellipse cx="164" cy="23" rx="13" ry="18" />
      <ellipse cx="195" cy="25" rx="13.500" ry="17" transform="rotate(10 195 25)" />
      <ellipse cx="214" cy="55" rx="13.500" ry="17" />
      <path d="M176 50c14 0 18 13 26 22 8 8 18 14 18 26 0 13-10 18-22 16-14-3-28-3-42 0-13 2-22-4-22-16 0-14 12-18 20-27 7-8 10-21 22-21z" />
      <text x="8" y="112" fontSize="78" fontWeight="bold" fontFamily="Liberation Sans">
        Bai
      </text>
      <text x="137" y="103" fontSize="50" fontWeight="bold" fontFamily="Liberation Sans">
        du
      </text>
      <text x="230" y="108" fontSize="59" fontWeight="900" fontFamily="Noto Sans CJK SC">
        经验
      </text>
      <text
        x="12"
        y="156"
        fontSize="38"
        fontWeight="600"
        fontFamily="Noto Sans"
        paintOrder="stroke"
      >
        jingyan.baidu.com
      </text>
    </svg>
  );
}

//component
function App() {
  return (
    <div className="relative flex flex-col h-screen overflow-hidden bg-[#e6e6e6] font-['Open_Sans','Noto_Sans_CJK_SC',sans-serif] text-[15px] text-[#444]">
      <Header />
      <Ribbon />
      <FormulaBar />
      <main className="flex flex-1 min-h-0">
        <Sheet />
        <VerticalScroll />
      </main>
      <SheetBar />
      <StatusBar />
      <Taskbar />
      <Watermark />
    </div>
  );
}

export default App;
